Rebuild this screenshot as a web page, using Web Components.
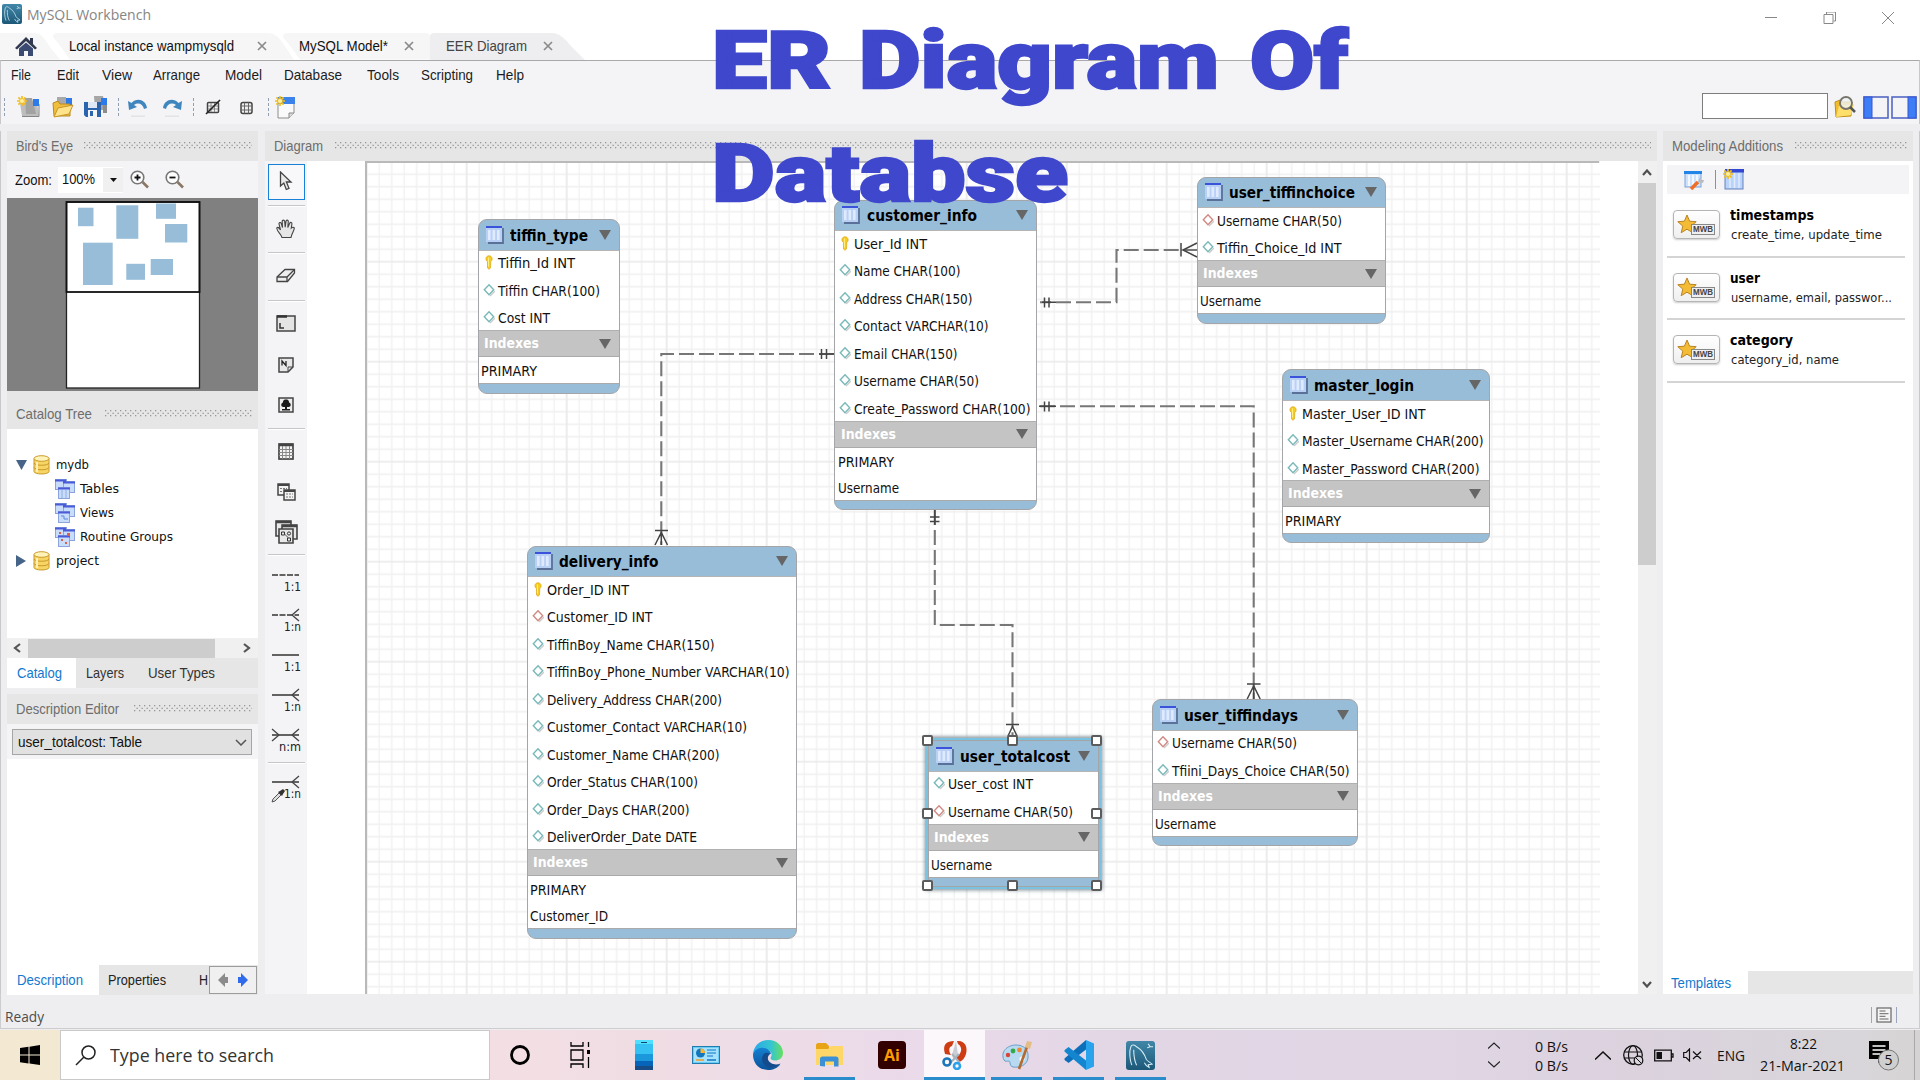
<!DOCTYPE html>
<html lang="en">
<head>
<meta charset="utf-8">
<title>MySQL Workbench</title>
<style>
html,body{margin:0;padding:0;width:1920px;height:1080px;overflow:hidden;background:#eeeef0}
</style>
</head>
<body>
<wb-app></wb-app>
<script>
const SANS = '"Liberation Sans",Arial,sans-serif';
const TAHOMA = '"DejaVu Sans Condensed","DejaVu Sans",sans-serif';
const SEGOE = '"Open Sans","Noto Sans",sans-serif';

class Base extends HTMLElement {
  connectedCallback() {
    if (this.shadowRoot) return;
    this.attachShadow({ mode: 'open' }).innerHTML =
      `<style>*{box-sizing:border-box}svg{display:block;flex:none}${this.css()}</style>${this.html()}`;
    this.ready();
  }
  css() { return ''; }
  html() { return ''; }
  ready() {}
}

/* Text condensed or stretched to the width given in "w". */
class FitText extends Base {
  css() { return `:host{display:block;flex:none;white-space:pre;width:${this.getAttribute('w')}px}span{display:inline-block;transform-origin:0 50%}`; }
  html() { return '<span><slot></slot></span>'; }
  ready() {
    const s = this.shadowRoot.querySelector('span'), n = s.getBoundingClientRect().width;
    if (n) s.style.transform = `scaleX(${this.getAttribute('w') / n})`;
  }
}
customElements.define('fit-text', FitText);

const fit = (t, w, cls = '', ml = 0) => `<fit-text w="${w}" class="${cls}" style="margin-left:${ml}px">${t}</fit-text>`;
/* A run of labels, [text, start, end], laid one after the other from x. */
const run = (items, x) => items.map(([t, a, b, c]) => { const s = fit(t, b - a, c || '', a - x); x = b; return s; }).join('');
/* A run of icons, [markup, start, width]. */
const icons = (items, x) => items.map(([m, a, w]) => { const s = `<div style="flex:none;width:${w}px;margin-left:${a - x}px">${m}</div>`; x = a + w; return s; }).join('');
const svg = (w, h, body, vb) => `<svg width="${w}" height="${h}" viewBox="${vb || `0 0 ${w} ${h}`}" fill="none">${body}</svg>`;

const spark = '<path d="M5 0v10M0 5h10M1.4 1.4l7.2 7.2M8.6 1.4L1.4 8.6" stroke="#f2bd1d" stroke-width="1.7"/><circle cx="5" cy="5" r="2" fill="#fff0a0"/>';
const star = '<path d="M10 1l2.6 6.2 6.6.5-5 4.4 1.6 6.6L10 15.2l-5.800 3.500 1.600-6.600-5-4.400 6.600-.5z" fill="#f4bc34" stroke="#b98422"/>';
const dolphin = (s) => svg(s, s, `<defs><linearGradient id="d" x2="0" y2="1"><stop stop-color="#4287a8"/><stop offset="1" stop-color="#1c5878"/></linearGradient></defs><rect width="30" height="30" rx="3" fill="url(#d)"/><path d="M6 25C4 20 3 11 5 6c1-3 4-2 6 0 5 3 8 7 10 13 1 2 4 3 6 5l-4 .5 1 3c-3-1-4-3-5-5M8 9c0 6 0 10 3 16M23 3l2 3 3 0M22 7l3-1" stroke="#d6ebf5" stroke-width="1.1"/>`, '0 0 30 30');
const I = {
  home: svg(22, 19, '<path d="M11 0l4 4V1h3v6l4 4-2 1.500L11 4 2 12.500 0 11z" fill="#30394f"/><path d="M4 11.500l7-6 7 6V19h-5v-5H9v5H4z" fill="#3a4a70"/>'),
  newf: svg(23, 22, `<path d="M3 7h17l2 13H5z" fill="#bdbdbd"/><path d="M5 20.500h17V8" stroke="#858585"/><path d="M8 2h7l4 16H9z" fill="#a2a2a2"/><rect x="16" y="3" width="6" height="7" fill="#2d7bea"/>${spark}`),
  open: svg(22, 22, '<path d="M5 1h9l2 14H5z" fill="#a9a9a9"/><rect x="14" y="2" width="6" height="7" fill="#2d7bea"/><path d="M1 7l5-2 2 3h10v12H2z" fill="#f0bd3c" stroke="#b98a22"/><path d="M2 21l4-9 15-3-4 9z" fill="#ffe38a" stroke="#c8962a"/>'),
  save: svg(24, 22, '<path d="M10 0h9l3 14H11z" fill="#a6a6a6"/><rect x="17" y="2" width="6" height="7" fill="#2d7bea"/><rect x="19" y="9" width="4" height="8" fill="#8c8c8c"/><path d="M0 6h17v15H2l-2-2z" fill="#2b64ad"/><rect x="4" y="6" width="9" height="6" fill="#dfe9f6"/><rect x="4" y="14" width="9" height="7" fill="#f5f5f5"/><rect x="6" y="15" width="3" height="5" fill="#2b64ad"/>'),
  undo: svg(20, 20, '<path d="M0 4l1 9 8-3-3-2c4-3 9-1 10 4l3-1C18 3 9 0 3.500 6z" fill="#3f86bf"/><path d="M3 19.500h14" stroke="#e3e3e6" stroke-width="2"/>'),
  redo: svg(20, 20, '<path d="M20 4l-1 9-8-3 3-2c-4-3-9-1-10 4l-3-1C2 3 11 0 16.500 6z" fill="#3f86bf"/><path d="M3 19.500h14" stroke="#e3e3e6" stroke-width="2"/>'),
  gslash: svg(16, 16, '<rect x="2.500" y="3.500" width="11" height="10" rx="1" fill="#f4f4f4" stroke="#444" stroke-width="1.500"/><path d="M3 7h10M3 10h10M6 4v9M9.500 4v9" stroke="#888"/><path d="M1 15L15 1" stroke="#222" stroke-width="1.600"/>'),
  grid: svg(13, 16, '<rect x="1" y="3.500" width="11" height="11" rx="2" fill="#eee" stroke="#444" stroke-width="1.500"/><path d="M1 7h11M1 11h11M4.500 3.500v11M8.500 3.500v11" stroke="#666"/>'),
  page: svg(21, 23, `<path d="M3 3h16v14l-5 5H3z" fill="#fafafa" stroke="#8d8d8d"/><rect x="3" y="1" width="17" height="7" fill="#3b83ea"/><path d="M14 22v-5h5" fill="#ddd" stroke="#888"/>${spark}`),
  sfold: svg(22, 22, '<path d="M1 6l5-2 3 2h9l-1 14L2 21z" fill="#f0bd2e" stroke="#bd8f1e"/><path d="M2 21l3-11 15-2-3 11z" fill="#ffdf6b"/><circle cx="12" cy="7" r="6" fill="#eef3f5cc" stroke="#77746a" stroke-width="1.800"/><path d="M16 11l5 5" stroke="#555" stroke-width="2.500"/>'),
  left: svg(26, 23, '<rect x="1" y="1" width="24" height="21" stroke="#5468c4" stroke-width="1.600"/><rect x="1" y="1" width="8" height="21" fill="#3d7df5" stroke="#3a55d0"/>'),
  right: svg(26, 23, '<rect x="1" y="1" width="24" height="21" stroke="#5468c4" stroke-width="1.600"/><rect x="17" y="1" width="8" height="21" fill="#3d7df5" stroke="#3a55d0"/>'),
  zin: svg(20, 19, '<circle cx="7.500" cy="7.500" r="6.300" fill="#fdfdfd" stroke="#777" stroke-width="1.600"/><path d="M7.500 4.500v6M4.500 7.500h6" stroke="#111" stroke-width="1.800"/><path d="M12.500 12l5.500 5.500" stroke="#8c7765" stroke-width="2.600"/>'),
  zout: svg(20, 19, '<circle cx="7.500" cy="7.500" r="6.300" fill="#fdfdfd" stroke="#777" stroke-width="1.600"/><path d="M4.500 7.500h6" stroke="#111" stroke-width="1.800"/><path d="M12.500 12l5.500 5.500" stroke="#8c7765" stroke-width="2.600"/>'),
  db: svg(18, 20, '<path d="M1 3.500v13c0 3.300 15 3.300 15 0v-13" fill="#f7d565" stroke="#c9982b"/><ellipse cx="8.500" cy="3.500" rx="7.500" ry="2.800" fill="#fff3b8" stroke="#c9982b"/><path d="M1 8c1 3 14 3 15 0M1 12.500c1 3 14 3 15 0" stroke="#c9982b"/><path d="M4 7v10" stroke="#fff0b0" stroke-width="2"/>'),
  tabs: (m) => svg(20, 20, `<g stroke="#8ba4dd" fill="#c9dcfa"><rect x=".5" y=".5" width="11" height="10"/><rect x="8.500" y="2.500" width="11" height="11"/><rect x="3.500" y="8.500" width="11" height="11"/></g><path d="M0 1.500h11M8 3.500h12M3 9.500h12" stroke="#4a5ad8" stroke-width="2"/>${m}`),
  cursor: svg(14, 20, '<path d="M1.500 1v14l3.300-3 2.500 6.500 2.700-1.200L7.400 11H12z" fill="#e9e9e9" stroke="#444" stroke-width="1.300"/>'),
  hand: svg(20, 20, '<path d="M6 18.500C5 15 1.500 13 .8 9.500.6 8 2.500 8 3.200 9.500L4.500 11 3 5c-.3-1.800 1.800-2 2.300-.5l1.200 4-.3-6C6.200.7 8.500.7 8.700 2.500l.5 5.700.8-6c.3-1.700 2.500-1.300 2.300.3l-.5 6 1.900-4.300c.7-1.500 2.600-.7 2.200.8L15.300 9c1-1 2.800-.8 3 0 .2 2-2.300 4.500-3.300 9.500z" fill="#e6e6e6" stroke="#444" stroke-width="1.100"/>'),
  eraser: svg(20, 16, '<path d="M1 9L9 1.500h9.500v3.500l-7 8.500H1z" fill="#eee" stroke="#444" stroke-width="1.300"/><path d="M1 9h10l7.500-7.500M11 9v4.500" stroke="#444" stroke-width="1.300"/>'),
  layer: svg(20, 17, '<rect x="1" y="1" width="18" height="15" fill="#e4e4e4" stroke="#444" stroke-width="1.500"/><path d="M1 1.500h10" stroke="#333" stroke-width="2.500"/><path d="M4 8v5h4" stroke="#333" stroke-width="1.500"/>'),
  note: svg(16, 16, '<path d="M1 1h14v9l-5 5H1z" fill="#e8e8e8" stroke="#444" stroke-width="1.500"/><path d="M10 15v-5h5" stroke="#444"/><path d="M4 8.500V4l4 4.500V4" stroke="#222" stroke-width="1.300"/>'),
  img: svg(16, 16, '<rect x="1" y="1" width="14" height="14" fill="#eee" stroke="#444" stroke-width="1.500"/><path d="M8 2.500c3 0 3 2 3 3 2 0 3 5-1 4.500l-1 0v2h3v1.500H4V12h3v-2H6c-4 .5-3-4.500-1-4.500 0-1 0-3 3-3z" fill="#1a1a1a"/>'),
  table: svg(16, 17, '<rect x="1" y="1" width="14" height="15" fill="#f4f4f4" stroke="#444" stroke-width="1.700"/><path d="M1 2h14" stroke="#444" stroke-width="2.500"/><path d="M1 6.500h14M1 9.500h14M1 12.500h14M4.500 3v13M8 3v13M11.500 3v13" stroke="#888"/>'),
  views: svg(19, 18, '<g fill="#f2f2f2" stroke="#444" stroke-width="1.500"><rect x="1" y="1" width="11" height="11"/><rect x="7" y="7" width="11" height="10"/></g><path d="M1 2h11M7 8h11" stroke="#444" stroke-width="2"/><path d="M3 5.500h7M3 8.500h3M9 11h7M9 14h7" stroke="#777" stroke-dasharray="2 1"/>'),
  routine: svg(23, 24, '<g fill="#e9e9e9" stroke="#444" stroke-width="1.600"><path d="M1 1h15v15H1z"/><path d="M7 5h15v14H7z"/><path d="M4 9h14v14H4z"/></g><path d="M1 2h15M7 6h15" stroke="#444" stroke-width="2.500"/><path d="M6.500 12h3v3h-3zM12.500 18h3v3h-3z" stroke="#333"/><circle cx="14" cy="13.500" r="1.600" stroke="#333"/><path d="M9.500 14l4 4" stroke="#555"/>'),
  rel: (k) => svg(30, 14, `<path d="M1 7h27" stroke="#333" stroke-width="1.500" ${k.includes('d') ? 'stroke-dasharray="6 1.500"' : ''}/>${k.includes('n') ? '<path d="M21 7l7-6M21 7l7 6" stroke="#444" stroke-width="1.300"/>' : ''}${k.includes('m') ? '<path d="M8 7L1 1M8 7l-7 6" stroke="#444" stroke-width="1.300"/>' : ''}`),
  wrench: svg(20, 20, '<rect x="1" y="2" width="16" height="15" fill="#cfe2fb" stroke="#7fa3d8"/><rect x="0" y="1" width="18" height="3" fill="#2285e8"/><path d="M5 5v11M9 5v11M13 5v11" stroke="#fff" stroke-width="1.500"/><path d="M7 19l7-7" stroke="#ee6f27" stroke-width="3.500"/><path d="M14 12l2-5 1 3 3 0-1 3z" fill="#b7bcc2"/>'),
  newt: svg(22, 21, `<rect x="2" y="2" width="18" height="18" fill="#b9d3fa" stroke="#6482bd"/><rect x="2" y="0" width="19" height="3.500" fill="#3347d0"/><path d="M7 4v15M11.500 4v15M16 4v15" stroke="#e1edff" stroke-width="1.500"/>${spark}`),
  tbl: svg(18, 18, '<path d="M17 2v15H2" stroke="#5a7099" stroke-width="1.800"/><rect x="0" y="1" width="16" height="15" fill="#b9d0f5"/><rect x="0" y="0" width="16" height="2" fill="#3b52da"/><path d="M3.300 4v10M7.800 4v10M12.300 4v10" stroke="#dfeaff" stroke-width="2.600"/>'),
  key: svg(12, 15, '<path d="M6 .8c3.500 0 4 4.200 1.800 5.800L7.500 13 6 14.300 4.500 13V6.600C2 5 2.500.8 6 .8z" fill="#f8cb22" stroke="#dba512" stroke-width=".7"/><path d="M5.500 2.500v9" stroke="#fff07a"/>'),
  dia: (c) => svg(12, 15, `<path d="M7 13l5-5" stroke="#ccc" stroke-width="1.500"/><path d="M6 1.800l4.700 5-4.700 5-4.700-5z" fill="#fff" stroke="${c}" stroke-width="1.400"/>`),
  tri: svg(12, 10, '<path d="M0 0h12L6 10z" fill="#666"/>'),
};

/* Stippled caption of a docked panel. */
class PanelCaption extends Base {
  css() { return `:host{display:flex;flex:none;align-items:center;height:var(--h,30px);background:#e6e6e6;padding:var(--pt,0) 6px 0 9px;font:14.500px/20px ${SANS};color:#6d6d6d}svg{margin-left:${this.getAttribute('gap') || 11}px;flex:1}`; }
  html() { return `${fit(this.getAttribute('label'), this.getAttribute('w'))}<svg height="8" width="10"><defs><pattern id="p" width="5" height="5" patternUnits="userSpaceOnUse"><rect width="1.300" height="1.300" fill="#979797"/><rect x="2.500" y="2.700" width="1.300" height="1.300" fill="#979797"/></pattern></defs><rect width="100%" height="7" fill="url(#p)"/></svg>`; }
}
customElements.define('panel-caption', PanelCaption);

class TitleBar extends Base {
  css() { return `:host{display:flex;height:60px;flex-direction:column;background:#fff;position:relative;flex:none}
   .t{display:flex;height:33px;padding:4px 0 0 2px;font:14.500px/16px ${SEGOE};color:#858585;align-items:flex-start}
   .t fit-text{padding-top:3px}
   .btn{margin-left:auto;display:flex;margin-right:26px;padding-top:8px}
   .tabs{display:grid;height:27px;grid-template-columns:1920px}
   .tabs>*{grid-area:1/1}
   .labels{display:flex;align-items:center;font:14.500px/20px ${SANS};color:#111;padding-bottom:2px;z-index:1}
   .e{color:#444}`; }
  html() {
    const x = svg(10, 10, '<path d="M1 1l8 8M9 1L1 9" stroke="#8a8a8a" stroke-width="1.700"/>');
    return `<div class="t">${dolphin(20)}${fit('MySQL Workbench', 124, '', 5)}
    <div class="btn">${svg(130, 14, '<path d="M1 5.500h12M60 2.500h9v9h-9zM62.500 2v-2h9v9h-2M118 0l12 12M130 0l-12 12" stroke="#888"/>')}</div></div>
    <div class="tabs">${svg(600, 28, '<path d="M0 0h34c8 0 12 8 16 14l10 12.500H0zM53 4c0-3 2-4 5-4h210c8 0 12 6 16 12l10 14.500H70L58 10zM283 4c0-3 2-4 5-4h138c3 0 4 2 4 4v22.500H300L290 13z" fill="#f6f6f7"/><path d="M430 3c0-2 2-3 4-3h118c8 0 14 7 18 12l15 15H430z" fill="#eeeef0"/>')}
    <div class="labels">${icons([[I.home, 15, 22]], 0)}${run([['Local instance wampmysqld', 69, 234]], 37)}${icons([[x, 257, 10]], 234)}${run([['MySQL Model*', 299, 388]], 267)}${icons([[x, 404, 10]], 388)}${run([['EER Diagram', 446, 527, 'e']], 414)}${icons([[x, 543, 10]], 527)}</div></div>`;
  }
}
customElements.define('title-bar', TitleBar);

class MenuArea extends Base {
  css() { return `:host{display:flex;flex-direction:column;height:64px;background:#f4f4f7;flex:none;border-top:1px solid #a9a9ab;border-left:1px solid #c8c8ca;border-right:1px solid #c8c8ca}
   .m{display:flex;height:28px;align-items:center;font:14.500px/20px ${SANS};color:#1c1c1c}
   .b{display:flex;height:35px;align-items:center;padding-top:1px}
   .s{height:18px;border-left:1px dashed #8fa0b5;width:0}
   input{width:126px;height:26px;border:1.500px solid #7d7d7d;background:#fff;display:block;padding:0;margin:0 0 2px}`; }
  html() {
    const s = '<div class="s"></div>';
    return `<div class="m">${run([['File', 11, 31], ['Edit', 57, 79], ['View', 102, 132], ['Arrange', 153, 200], ['Model', 225, 262], ['Database', 284, 342], ['Tools', 367, 399], ['Scripting', 421, 473], ['Help', 496, 524]], 1)}</div>
    <div class="b">${icons([[s, 4, 1], [I.newf, 17, 23], [I.open, 52, 22], [I.save, 84, 24], [s, 118, 1], [I.undo, 128, 20], [I.redo, 162, 20], [s, 193, 1], [I.gslash, 205, 16], [I.grid, 240, 13], [s, 268, 1], [I.page, 275, 21], ['<input aria-label="Search">', 1702, 126], [I.sfold, 1834, 22], [I.left, 1863, 26], [I.right, 1891, 26]], 1)}</div>`;
  }
}
customElements.define('menu-area', MenuArea);

class BirdsEye extends Base {
  css() { return `:host{display:block;flex:none}.z{display:flex;height:37px;background:#f4f4f7;align-items:center;padding-left:8px;font:14.500px/20px ${SANS};color:#111}
   .box{display:flex;align-items:center;background:#fff;width:65px;height:26px;margin:0 7px 0 6px;padding:0 0 2px 4px}.dd{margin:2px 0 0 8px;width:20px;height:24px;background:#f0f0f0;display:grid;place-items:center}.g{height:193px;background:#808080}svg+svg{margin-left:15px}`; }
  html() {
    const r = [[78, 207.7, 15.5, 18.5], [116.3, 205.3, 22, 33.5], [156, 203.5, 20, 15.3], [165, 224, 22.3, 18.5], [83, 242.700, 29.700, 42.300], [126.300, 263.800, 18.700, 16], [150.700, 259, 22.300, 16]];
    return `<div class="z">${fit('Zoom:', 37)}<div class="box">${fit('100%', 33)}<div class="dd">${svg(7, 4, '<path d="M0 0h7L3.500 4z" fill="#111"/>')}</div></div>${I.zin}${I.zout}</div>
    <div class="g">${svg(251, 193, `<rect x="66.500" y="202" width="133" height="186" fill="#fff" stroke="#222" stroke-width="1.300"/><rect x="66.500" y="202" width="133" height="90" stroke="#111" stroke-width="1.800"/>${r.map(a => `<rect x="${a[0]}" y="${a[1]}" width="${a[2]}" height="${a[3]}" fill="#98bdd8"/>`).join('')}`, '7 198 251 193')}</div>`;
  }
}
customElements.define('birds-eye', BirdsEye);

class CatalogTree extends Base {
  css() { return `:host{display:block;flex:none}.w{background:#fff;height:209px;padding-top:24px;font:13px/22px ${TAHOMA};color:#111}.r{display:flex;height:23.900px;align-items:center}
   .sb{display:flex;height:20px;background:#f0f0f0;align-items:center;padding:0 6px}.th{width:187px;height:19px;background:#cdcdcd;margin:0 28px 0 7px}
   .tabs{display:flex;height:30px;background:#e6e6e6;font:14.500px/31px ${SANS};color:#333}.on{background:#fff;color:#1179cf;width:69px;padding-left:9.500px}`; }
  html() {
    const leaf = (i, t, w) => `<div class="r">${icons([[i, 55, 20]], 7)}${fit(t, w, '', 5)}</div>`;
    return `<div class="w"><div class="r">${icons([[svg(11, 11, '<path d="M0 1h11L5.500 11z" fill="#466388"/>'), 16, 11], [I.db, 33, 18]], 7)}${fit('mydb', 33, '', 5)}</div>
    ${leaf(I.tabs('<path d="M7 11v8M11 11v8" stroke="#8fb0ea"/>'), 'Tables', 39)}${leaf(I.tabs('<path d="M6 13h3v3h4" stroke="#5f86dd"/>'), 'Views', 34)}${leaf(I.tabs('<path d="M4 5h2v2H4zM12 6h3v3h-3zM6 12h2v2H6zM10 15h2v2h-2z" fill="#d8604e"/>'), 'Routine Groups', 93)}
    <div class="r">${icons([[svg(11, 12, '<path d="M0 0v12l10-6z" fill="#466388"/>'), 16, 11], [I.db, 33, 18]], 7)}${fit('project', 43, '', 5)}</div></div>
    <div class="sb">${svg(8, 10, '<path d="M7 1L2 5l5 4" stroke="#555" stroke-width="2.200"/>')}<div class="th"></div>${svg(8, 10, '<path d="M1 1l5 4-5 4" stroke="#555" stroke-width="2.200"/>')}</div>
    <div class="tabs"><div class="on">${fit('Catalog', 45)}</div>${run([['Layers', 86, 124], ['User Types', 148, 215]], 76)}</div>`;
  }
}
customElements.define('catalog-tree', CatalogTree);

class DescEditor extends Base {
  css() { return `:host{display:flex;flex-direction:column;flex:none;height:271px;font:14.500px/20px ${SANS};color:#222}
   .c{height:35px;background:#f4f4f7;padding:5px}.s{display:flex;align-items:center;justify-content:space-between;width:240px;height:26px;background:#e1e1e1;border:1px solid #a6a6a6;padding:0 4px 0 5px;color:#111}
   .w{background:#fff;height:206px}.tabs{display:flex;height:30px;background:#e6e6e6;line-height:30px;overflow:hidden}.on{background:#fff;color:#1179cf;width:92px;padding-left:9.500px}
   .n{display:flex;width:48px;height:28px;margin:1px 0 0 1px;background:#f0f0f0;border:1px solid #9c9c9c;align-items:center;justify-content:space-evenly}`; }
  html() { return `<div class="c"><div class="s">${fit('user_totalcost: Table', 124)}${svg(12, 7, '<path d="M1 1l5 5 5-5" stroke="#555" stroke-width="1.500"/>')}</div></div><div class="w"></div>
   <div class="tabs"><div class="on">${fit('Description', 66)}</div>${run([['Properties', 108, 166], ['H', 199, 208]], 99)}<div class="n">${svg(11, 14, '<path d="M0 7l7-7v4h3v6H7v4z" fill="#8b8b8b"/>')}${svg(11, 14, '<path d="M11 7L4 0v4H1v6h3v4z" fill="#2f6bea"/>')}</div></div>`; }
}
customElements.define('desc-editor', DescEditor);

class ToolStrip extends Base {
  css() { return `:host{display:flex;flex-direction:column;width:42px;background:#f4f4f7;align-items:center;font:12.500px/13px ${TAHOMA};color:#222;flex:none}
   .i{display:grid;place-items:center;width:37px;padding-bottom:2px}.sel{height:36px;border:1.500px solid #1980d8;margin-top:3px;background:#f8f8fa}
   .h{width:37px;height:2px;background:#c6c6c8;border-bottom:1px solid #fff}.r{height:40px;display:flex;flex-direction:column;align-items:flex-end;width:30px;margin-left:0}.r fit-text{margin-top:-2.500px}`; }
  html() {
    const c = (i, h, k = '') => `<div class="i ${k}" style="height:${h}px">${i}</div>`, h = '<div class="h"></div>';
    const r = (k, t, w, d = '') => `<div class="r">${I.rel(k)}${d}${fit(t, w)}</div>`;
    const dr = `<div style="height:0;width:30px">${svg(14, 14, '<path d="M1 13l1-3 6-6 2 2-6 6z" fill="#ddd" stroke="#555"/><path d="M7 3l2-1 3-2 2 2-2 3-1 2z" fill="#333"/>')}</div>`;
    return c(I.cursor, 36, 'sel') + '<div style="height:5px"></div>' + h + c(I.hand, 45) + h + c(I.eraser, 46) + h + c(I.layer, 44) + c(I.note, 40) + c(I.img, 40)
      + `<div style="height:2px"></div>` + h + c(I.table, 44) + c(I.views, 37) + c(I.routine, 43) + h + '<div style="height:12px"></div>' + r('d', '1:1', 17) + r('dn', '1:n', 17) + r('', '1:1', 17) + r('n', '1:n', 17) + r('nm', 'n:m', 22)
      + `<div style="margin-top:-6px">${h}</div><div style="height:11px"></div>` + r('n', '1:n', 17, dr);
  }
}
customElements.define('tool-strip', ToolStrip);

/* One table figure of the EER diagram. */
class ErTable extends Base {
  css() {
    return `:host{display:flex;flex-direction:column;position:absolute;border:1.500px solid #a3a5a8;border-radius:9px;background:#98bdd8;overflow:hidden;font:13.500px/27px ${TAHOMA};color:#111}
    :host([selected]){border-radius:0;overflow:visible;outline:2px solid #79c3e0;box-shadow:0 0 4px 3px #7a8890}
    .h{display:flex;height:29.500px;align-items:center;padding:0 8px 0 7px;font:bold 15.500px/26px ${TAHOMA};color:#000}
    .h fit-text{margin-left:6.500px!important;padding-top:2px}.h svg:last-child,.x svg{margin-left:auto}
    .c{background:#fff;border-top:1px solid #b5b5b5;overflow:hidden;padding-left:4px;flex:none}
    .r{display:flex;height:27.500px;align-items:center;margin-top:-.4px;margin-bottom:.4px}.r svg{margin:-2px 3px 0 0}
    .x{display:flex;height:27px;align-items:center;background:#c4c4c4;padding:0 8px 0 5.500px;font-weight:bold;color:#fff;border-bottom:1px solid #aaa;border-top:1px solid #b0b0b0;flex:none}
    .k{background:#fff;border-bottom:1px solid #aaa;padding-left:2.500px;flex:none}.k fit-text{height:26px;padding-top:1px}
    i{position:absolute;width:11px;height:11px;background:#fff;border:2px solid #5b5b5b;border-radius:2px}`;
  }
  html() {
    const d = JSON.parse(this.getAttribute('data'));
    let h = `<div class="h">${I.tbl}${fit(d.n, d.w)}${I.tri}</div><div class="c" style="height:${27.5 * d.c.length - 2}px">${d.c.map(([k, t, w]) => `<div class="r">${k == 'k' ? I.key : I.dia(k == 'f' ? '#d18a83' : '#79b9ba')}${fit(t, w)}</div>`).join('')}</div>
    <div class="x">${fit('Indexes', 55)}${I.tri}</div><div class="k">${d.k.map(([t, w]) => fit(t, w)).join('')}</div>`;
    if (this.hasAttribute('selected')) for (const x of [0, 50, 100]) for (const y of [0, 50, 100]) if (x != 50 || y != 50) h += `<i style="left:calc(${x}% - 6.500px);top:calc(${y}% - 6px)"></i>`;
    return h;
  }
}
customElements.define('er-table', ErTable);

class DiagramCanvas extends Base {
  css() { return `:host{display:block;position:relative;flex:1;background:#fff;overflow:hidden}`; }
  html() {
    const T = [
      [477.5, 219, 142.5, 174.5, { n: 'tiffin_type', w: 78, c: [['k', 'Tiffin_Id INT', 77], ['o', 'Tiffin CHAR(100)', 102], ['o', 'Cost INT', 52]], k: [['PRIMARY', 56]] }],
      [834, 199.5, 203, 310.5, { n: 'customer_info', w: 110, c: [['k', 'User_Id INT', 73], ['o', 'Name CHAR(100)', 106.5], ['o', 'Address CHAR(150)', 118.5], ['o', 'Contact VARCHAR(10)', 134.5], ['o', 'Email CHAR(150)', 103.5], ['o', 'Username CHAR(50)', 125], ['o', 'Create_Password CHAR(100)', 176.5]], k: [['PRIMARY', 56], ['Username', 61]] }],
      [1196.5, 176.5, 189.5, 147, { n: 'user_tiffinchoice', w: 126, c: [['f', 'Username CHAR(50)', 125], ['o', 'Tiffin_Choice_Id INT', 124.5]], k: [['Username', 61]] }],
      [1281.5, 369.3, 208, 174, { n: 'master_login', w: 100, c: [['k', 'Master_User_ID INT', 123.5], ['o', 'Master_Username CHAR(200)', 181.5], ['o', 'Master_Password CHAR(200)', 177.5]], k: [['PRIMARY', 56]] }],
      [526.5, 545.5, 270.5, 393, { n: 'delivery_info', w: 99.5, c: [['k', 'Order_ID INT', 82], ['f', 'Customer_ID INT', 105.5], ['o', 'TiffinBoy_Name CHAR(150)', 167.5], ['o', 'TiffinBoy_Phone_Number VARCHAR(10)', 242.5], ['o', 'Delivery_Address CHAR(200)', 175], ['o', 'Customer_Contact VARCHAR(10)', 200], ['o', 'Customer_Name CHAR(200)', 172.5], ['o', 'Order_Status CHAR(100)', 151], ['o', 'Order_Days CHAR(200)', 142.5], ['o', 'DeliverOrder_Date DATE', 150]], k: [['PRIMARY', 56], ['Customer_ID', 78]] }],
      [927.5, 740, 171, 147, { n: 'user_totalcost', w: 110, c: [['o', 'User_cost INT', 85], ['f', 'Username CHAR(50)', 125]], k: [['Username', 61]] }, 'selected'],
      [1151.5, 699, 206, 146.5, { n: 'user_tiffindays', w: 114, c: [['f', 'Username CHAR(50)', 125], ['o', 'Tfiini_Days_Choice CHAR(50)', 177.5]], k: [['Username', 61]] }],
    ];
    const minor = [1, 2, 3, 4, 5, 6, 7].map(i => `M${i * 12.5} 0v100M0 ${i * 12.5}h100`).join('');
    const lines = svg(1331, 834, `<defs><pattern id="g" x="366.700" y="161.700" width="100" height="100" patternUnits="userSpaceOnUse"><path d="${minor}" stroke="#f0f0f0" stroke-width="1.300"/><path d="M0 0h100M0 0v100M100 0v100M0 100h100" stroke="#e9e9e9" stroke-width="1.700"/></pattern></defs>
    <rect x="367" y="161" width="1233" height="834" fill="url(#g)"/><path d="M366 995V162h1233" stroke="#b9b9b9" stroke-width="2"/>
    <g stroke="#777" stroke-width="2.100"><path d="M834 354H661.300V545" stroke-dasharray="15 5"/><path d="M1040 302.300h76.500V250H1197" stroke-dasharray="15 5" stroke-dashoffset="4"/><path d="M1040 406.300h213.700V699" stroke-dasharray="15 5"/><path d="M934.800 510v115H1012.500V740" stroke-dasharray="15 5"/></g>
    <g stroke="#444" stroke-width="1.500"><path d="M821.500 349v10M826.500 349v10M819 354h15M655 530.500h13M655 545l6.300-12.500L667.500 545M661.300 532v13"/>
    <path d="M1044.500 297.500v10M1049 297.500v10M1042 302.300h14M1181 243v13.500M1197 243l-14 7 14 7"/>
    <path d="M1044.500 401.500v10M1049 401.500v10M1039 406.300h17M1247 684h13.500M1247.200 699l6.500-13 6.500 13M1253.700 686v13"/>
    <path d="M930 517h9.500M930 521.500h9.500M934.800 510v15M1006 724.500h13M1008 736l4.500-9.500 4.500 9.500"/></g>`, '307 161 1331 834');
    return lines + T.map(([x, y, w, h, d, s]) => `<er-table ${s || ''} style="left:${x - 307}px;top:${y - 161}px;width:${w}px;height:${h}px" data='${JSON.stringify(d)}'></er-table>`).join('');
  }
}
customElements.define('diagram-canvas', DiagramCanvas);

class VScroll extends Base {
  css() { return `:host{display:flex;flex-direction:column;width:19px;background:#f0f0f0;flex:none;align-items:center;justify-content:space-between;padding:8px 1px 6px 0}.t{width:18px;height:382px;background:#cdcdcd;margin:7px 0 auto}`; }
  html() { return `${svg(10, 7, '<path d="M1 6l4-4.500L9 6" stroke="#505050" stroke-width="2.200"/>')}<div class="t"></div>${svg(10, 7, '<path d="M1 1l4 4.500L9 1" stroke="#505050" stroke-width="2.200"/>')}`; }
}
customElements.define('v-scroll', VScroll);

class TemplateItem extends Base {
  css() { return `:host{display:flex;height:62.500px;border-bottom:2px solid #d4d4d4;margin:0 8px 0 4px;padding:15px 0 0 6px;flex:none}
  .b{width:47px;height:29px;border:1.500px solid #b5b5b5;border-radius:4px;background:linear-gradient(#fff,#efefef);box-shadow:0 1px 2px #ccc;display:grid;flex:none}.b>*{grid-area:1/1}.b svg{margin:3px 0 0 3px}
  .m{align-self:end;justify-self:end;margin:0 4px 3px 0;width:24px;height:11px;border:1px solid #888;background:#efefef;font:bold 8.500px/9px ${SANS};color:#444;padding-left:1px}
  .t{margin:-4px 0 0 9.500px;font:bold 14px/19px "DejaVu Sans",sans-serif;color:#000}.s{font:12.500px/20px "DejaVu Sans",sans-serif;color:#222}`; }
  html() { const g = n => this.getAttribute(n); return `<div class="b">${svg(20, 20, star)}<div class="m">${fit('MWB', 20)}</div></div><div class="t">${fit(g('name'), g('nw'))}<div class="s">${fit(g('cols'), g('cw'), '', 1)}</div></div>`; }
}
customElements.define('template-item', TemplateItem);

class SideAdditions extends Base {
  css() { return `:host{display:flex;flex-direction:column;flex:1;background:#fff}.t{display:flex;align-items:center;height:29px;margin:4px 4px 1px;background:#f4f4f7;flex:none}.s{width:1px;height:19px;background:#7c94ad}
  .f{display:flex;margin-top:auto;height:23px;font:14px/24px ${SANS}}.on{width:85px;padding-left:8px;color:#1179cf}.o{flex:1;background:#e6e6e6}`; }
  html() { return `<div class="t">${icons([[I.wrench, 1684, 20], ['<div class="s"></div>', 1715, 1], [I.newt, 1723, 22]], 1667)}</div>
  <template-item name="timestamps" nw="84" cols="create_time, update_time" cw="151"></template-item><template-item name="user" nw="30" cols="username, email, passwor..." cw="161"></template-item><template-item name="category" nw="63" cols="category_id, name" cw="108"></template-item>
  <div class="f"><div class="on">${fit('Templates', 60)}</div><div class="o"></div></div>`; }
}
customElements.define('side-additions', SideAdditions);

class TaskBar extends Base {
  css() { return `:host{display:flex;height:50px;flex:none;background:linear-gradient(90deg,#f3dfe3 490px,#f0dde4 650px,#eadaea 920px,#e2d6e5 1130px,#e0d6e4 1440px,#dbd2de 1640px,#d8d6da 1860px,#d6d3d3);font:15px/20px ${SEGOE};color:#111}
  .st{width:60px;background:#f3e8d1;display:grid;place-items:center;flex:none}.se{display:flex;width:430px;background:#fff;border:1px solid #c9c9c9;align-items:center;padding-left:14px;font-size:19px;color:#333;flex:none}
  .a{display:grid;place-items:center;height:50px;flex:none;border-bottom:3px solid transparent;padding-top:3px}.u{border-color:#2a8cca}.on{background:#fbf7fb}
  .ai{width:28px;height:28px;border-radius:4px;background:#300;color:#ff9a00;font:bold 16px/27px ${SEGOE};display:grid;place-items:center}
  .col{display:flex;flex-direction:column;justify-content:center;flex:none}.tray{display:flex;align-items:center;flex:none}`; }
  html() {
    const A = [
      [svg(20, 20, '<circle cx="10" cy="10" r="8.500" stroke="#000" stroke-width="2.800"/>'), 490, 60],
      [svg(21, 27, '<path d="M1 0v4h12V0M1 26v-4h12v4M1 8h12v10H1zM18.500 0v5M18.500 15v11" stroke="#000" stroke-width="1.300"/><path d="M17 8h3v4h-3z" fill="#000"/>'), 550, 60],
      [svg(18, 30, '<rect width="18" height="30" rx="2" fill="#35c1f1"/><path d="M0 0h18v4H0z" fill="#50e0ff"/><path d="M0 14h18v7H0z" fill="#1b97dc"/><path d="M0 21h18v5H0z" fill="#0765b9"/><path d="M0 26h18v4H0z" fill="#184c86"/><path d="M6 2.500h6" stroke="#146"/>'), 614, 60],
      [svg(28, 18, '<rect x=".5" y=".5" width="27" height="17" fill="#69cdf6" stroke="#227cae"/><rect x="2" y="2" width="24" height="14" fill="#a5e2ff"/><circle cx="8.500" cy="7" r="4.500" fill="#1276bd"/><path d="M8.500 7V2.500A4.500 4.500 0 0 1 13 7z" fill="#ffb52d"/><path d="M15 4h9M15 7h9M15 10h6" stroke="#1276bd"/><path d="M4 14h8" stroke="#f59c21" stroke-width="1.500"/><path d="M15 14h9" stroke="#1276bd" stroke-width="1.500"/>'), 676, 60],
      [svg(30, 30, '<defs><linearGradient id="e1" x2="1"><stop stop-color="#2ba7e8"/><stop offset=".6" stop-color="#35c5d1"/><stop offset="1" stop-color="#68df5e"/></linearGradient><linearGradient id="e2" x2="0" y2="1"><stop stop-color="#1680d1"/><stop offset="1" stop-color="#0a5299"/></linearGradient></defs><path d="M0 14C1 5 8 0 15.500 0 24 0 30 6 30 13c0 5-4 7.500-8 7.500-4 0-5-2-4-3.500 2-4-1-7-5-7C6 10 1 14 0 17z" fill="url(#e1)"/><path d="M0 15c1-5 6-8 11-7 4 .5 7 4 7 6-5 0-9 6-4 11 4 3.500 9 3 13-.5C25 28 20 30 15 30 6 30 0 23 0 15z" fill="url(#e2)"/><path d="M9 19c0-5 4-8 8-5-3 2-3 7 1 9 3 2 7 1.500 9.500.5C24 30 10 30 9 19z" fill="#134b8d"/>'), 738, 60],
      [svg(27, 24, '<path d="M0 2c0-1 1-2 2-2h8l3 3v6H0z" fill="#e8a317"/><path d="M0 6h12l3-3h11c.6 0 1 .4 1 1v18H0z" fill="#ffd768"/><path d="M4 23v-7c0-1.500 1-2.500 2.500-2.500H20c1.500 0 2.500 1 2.500 2.500v7.500h-4.500v-5H9v5z" fill="#3a8fd6"/>'), 804, 51, 'u'],
      ['<div class="ai">Ai</div>', 862, 60],
      [svg(26, 30, '<path d="M3 14C0 4 5 1 12 1L10 6C6 7 7 12 9 15zM15 1c8-1 11 6 9 13-1 4-4 7-7 8l-3-5c6-3 7-10 2-13z" fill="#cf3c14"/><path d="M14 1l2 14-4 6-2-6z" fill="#c9ced4"/><path d="M10 14l8 9M17 14l-9 9" stroke="#a8b2bd" stroke-width="2"/><circle cx="5" cy="22" r="3.500" stroke="#1d75bb" stroke-width="2.600"/><circle cx="15" cy="26" r="3" stroke="#2ba2ea" stroke-width="2.600"/>'), 924, 61, 'u on'],
      [svg(30, 30, '<path d="M2 20C-2 12 5 5 14 5c8 0 13 5 12 13-1 7-8 10-15 9-4-1-2-5-4-6-2 0-4 1-5-1z" fill="#b7daf0" stroke="#6a9fc5"/><circle cx="6" cy="15" r="2.200" fill="#dc4334"/><circle cx="11" cy="11" r="2.400" fill="#35a84a"/><circle cx="17.500" cy="10" r="2.400" fill="#ef8834"/><circle cx="20" cy="19" r="2.500" fill="#fff"/><path d="M26 4L17 29" stroke="#b56a30" stroke-width="2.600"/><path d="M23 7l2-6 5 1-2 7z" fill="#e2bd86"/>'), 991, 51, 'u'],
      [svg(30, 30, '<path d="M22 0v9.500L4.500 23 1 20.300c-.8-.7-.8-1.600 0-2.300z" fill="#0d6fb9"/><path d="M22 30v-9.500L4.500 7 1 9.700c-.8.7-.8 1.600 0 2.300z" fill="#1486cf"/><path d="M22 0l8 3.500v23L22 30z" fill="#29a3ec"/>'), 1053, 51, 'u'],
      [dolphin(29), 1115, 51, 'u'],
    ];
    let x = 490;
    const apps = A.map(([m, a, w, c = '']) => { const s = `<div class="a ${c}" style="width:${w}px;margin-left:${a - x}px">${m}</div>`; x = a + w; return s; }).join('');
    const net = `<div class="col">${fit('0 B/s', 33)}<div style="margin-top:-1px">${fit('0 B/s', 33)}</div></div>`;
    return `<div class="st">${svg(20, 20, '<path d="M0 3l8.500-1.200V9.500H0zM9.500 1.700L20 0v9.500H9.500zM0 10.500h8.500v8L0 17.200zM9.500 10.500H20V20L9.500 18.600z" fill="#000"/>')}</div>
    <div class="se">${svg(21, 21, '<circle cx="13.500" cy="7.500" r="6.500" stroke="#222" stroke-width="1.500"/><path d="M8.700 12.300L1 20" stroke="#222" stroke-width="1.500"/>')}${fit('Type here to search', 164, '', 14)}</div>${apps}
    <div class="tray">${icons([[svg(12, 26, '<path d="M0 6.500L6 1l6 5.500M0 19.500L6 25l6-5.500" stroke="#222" stroke-width="1.200"/>'), 1488, 12], [net, 1535, 33],
      [svg(16, 9, '<path d="M0 8.500L8 1l8 7.500" stroke="#111" stroke-width="1.500"/>'), 1595, 16],
      [svg(21, 21, '<circle cx="10" cy="10" r="9.300" stroke="#111" stroke-width="1.300"/><ellipse cx="10" cy="10" rx="4.500" ry="9.300" stroke="#111" stroke-width="1.200"/><path d="M1 7h18M1 13h18" stroke="#111" stroke-width="1.200"/><circle cx="15.500" cy="15.500" r="4.300" fill="#dbd4de" stroke="#111" stroke-width="1.200"/><path d="M12.500 12.500l6 6" stroke="#111"/>'), 1623, 21],
      [svg(20, 13, '<path d="M.7 1.200h16.600v10.600H.7zM17.500 5h1.500v3h-1.500" stroke="#111" stroke-width="1.300"/><rect x="2.500" y="3" width="5.500" height="7" fill="#111"/>'), 1654, 20],
      [svg(19, 14, '<path d="M.7 4.500h2.500L6.500 1v12L3.200 9.500H.7zM10 3.500l8 7.500M18 3.500L10 11" stroke="#111" stroke-width="1.200"/>'), 1683, 19],
      [fit('ENG', 28), 1717, 28],
      [`<div class="col" style="gap:2px;margin-top:-2px">${fit('8:22', 27, '', 30)}${fit('21-Mar-2021', 85)}</div>`, 1760, 85],
      [svg(31, 32, '<path d="M0 2h20v18h-7l-4 4v-4H0z" fill="#000"/><path d="M3.500 7h13M3.500 11h13M3.500 15h8" stroke="#fff" stroke-width="1.500"/><circle cx="19.500" cy="21" r="10" fill="#d0cfcf" stroke="#777"/><text x="19.500" y="26" text-anchor="middle" font-family="Open Sans" font-size="14" fill="#111">5</text>'), 1869, 31],
      ['<div style="height:50px;background:#a9a7aa"></div>', 1914, 1]], 1166)}</div>`;
  }
}
customElements.define('task-bar', TaskBar);

class WbApp extends Base {
  css() { return `:host{display:flex;flex-direction:column;width:1920px;height:1080px;background:#eeeef0;position:relative;overflow:hidden}
  .main{display:flex;height:863px;flex:none;padding:0 7px 0 6px;margin-top:7px;border:0 solid #c8c8ca;border-width:0 1px;gap:6px}
  .l{width:251px;display:flex;flex-direction:column;margin-right:1px;flex:none}.c{width:1392px;display:flex;flex-direction:column;flex:none}.r{width:250px;display:flex;flex-direction:column;flex:none}
  .cc{display:flex;flex:1;min-height:0}
  .st{display:flex;height:35px;align-items:center;border:1px solid #cdcdcf;border-top:0;padding:8px 22px 0 4px;justify-content:space-between;font:14.500px/22px ${SEGOE};color:#4d4d4d;flex:none}
  .st fit-text{padding-top:3px}
  .big{position:absolute;left:712px;top:5px;font:900 79px/113px Roboto,"Liberation Sans",sans-serif;color:#3f48cc;-webkit-text-stroke:2.500px #3f48cc}
  .big div{display:flex}`; }
  html() { return `<title-bar></title-bar><menu-area></menu-area>
  <div class="main"><div class="l"><panel-caption label="Bird's Eye" w="57"></panel-caption><birds-eye></birds-eye>
   <panel-caption label="Catalog Tree" w="76" gap="13" style="--h:38px;--pt:7px"></panel-caption><catalog-tree></catalog-tree>
   <div style="height:6px;flex:none"></div><panel-caption label="Description Editor" w="103" gap="15"></panel-caption><desc-editor></desc-editor></div>
   <div class="c"><panel-caption label="Diagram" w="49" gap="12"></panel-caption><div class="cc"><tool-strip></tool-strip><diagram-canvas></diagram-canvas><v-scroll></v-scroll></div></div>
   <div class="r"><panel-caption label="Modeling Additions" w="111" gap="12"></panel-caption><side-additions></side-additions></div></div>
  <div class="st">${fit('Ready', 39)}${svg(26, 17, '<path d="M.5 0v16M25.500 0v16" stroke="#9da5bd"/><rect x="6" y="1" width="14" height="14" fill="#f4f4f4" stroke="#666" stroke-width="1.200"/><path d="M8.500 4h6M8.500 6.700h9M8.500 9.300h6M8.500 12h9" stroke="#666"/>')}</div>
  <task-bar style="margin-top:auto"></task-bar>
  <div class="big"><div>${fit('ER', 119)}${fit('Diagram', 360, '', 28)}${fit('Of', 98, '', 31)}</div>${fit('Databse', 356)}</div>`; }
}
customElements.define('wb-app', WbApp);
</script>
</body>
</html>
